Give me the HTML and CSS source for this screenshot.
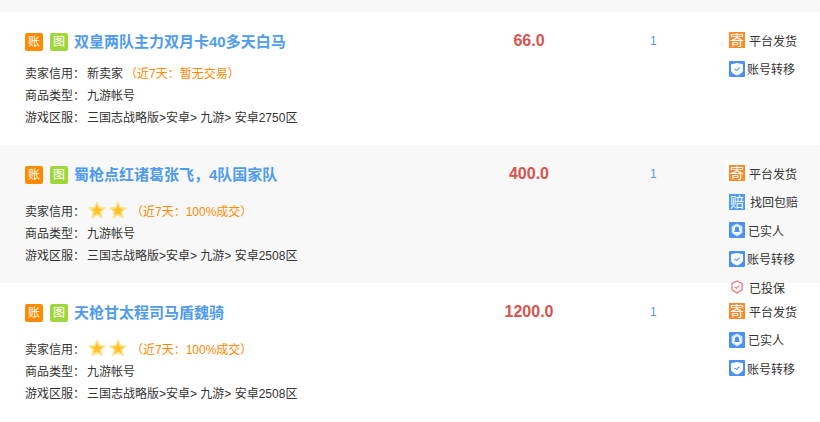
FILE: index.html
```html
<!DOCTYPE html>
<html lang="zh-CN">
<head>
    <meta charset="UTF-8">
    <title>商品列表</title>
    <link rel="stylesheet" href="styles.css">
</head>
<body>
    <svg class="defs" width="0" height="0">
        <symbol id="ico-person" viewBox="0 0 16 16">
            <rect width="16" height="16" rx="1" fill="#4a90f5"/>
            <path d="M8 1.6 13.4 4.2V11L8 14.4 2.6 11V4.2Z" fill="#cfe2fd"/>
            <circle cx="8" cy="8" r="4.4" fill="#fff"/>
            <path d="M8 4.6a2.1 2.1 0 0 1 2.1 2.1V8.6L11 10H5l.9-1.4V6.7A2.1 2.1 0 0 1 8 4.6Z" fill="#4a90f5"/>
        </symbol>
        <symbol id="ico-shield" viewBox="0 0 16 16">
            <rect width="16" height="16" rx="1" fill="#4a90f5"/>
            <path d="M2 3.2 8 2l6 1.2v5.6C14 12 10.500 13.600 8 14.500 5.500 13.600 2 12 2 8.800Z" fill="#fff"/>
            <path d="M5.600 7.800 7.500 9.600 10.600 6.600" fill="none" stroke="#4a90f5" stroke-width="1.100"/>
        </symbol>
        <symbol id="ico-guard" viewBox="0 0 16 16">
            <path d="M8 2 13 4.500V10.800L8 14 3 10.800V4.500Z" fill="#fff" stroke="#f2777a" stroke-width="1.300"/>
            <path d="M5.800 7.800 7.500 9.500 10.300 6.700" fill="none" stroke="#f2777a" stroke-width="1.100"/>
        </symbol>
        <symbol id="ico-star" viewBox="0 0 18 18">
            <path d="M9 .8 11.500 6.300 17.400 7 13 11 14.200 17 9 14 3.800 17 5 11 .6 7 6.500 6.300Z" fill="#ffe27a" stroke="#fbe39a" stroke-width="1"/>
            <path d="M9 3.500 10.700 7.500 14.500 8 11.500 10.600 12.300 14.300 9 12.400 5.700 14.300 6.500 10.600 3.500 8 7.300 7.500Z" fill="#fcc22e"/>
        </symbol>
    </svg>

    <div class="list">
        <div class="row">
            <div class="info">
                <h3 class="title"><span class="tag tag-zh">账</span><span class="tag tag-tu">图</span><a>双皇两队主力双月卡40多天白马</a></h3>
                <p class="line first"><span class="label">卖家信用：</span>新卖家<span class="recent">（近7天：暂无交易）</span></p>
                <p class="line"><span class="label">商品类型：</span>九游帐号</p>
                <p class="line"><span class="label">游戏区服：</span>三国志战略版&gt;安卓&gt; 九游&gt; 安卓2750区</p>
            </div>
            <div class="price">66.0</div>
            <div class="count">1</div>
            <ul class="services">
                <li><span class="ico ico-orange">寄</span><span class="s1">平台发货</span></li>
                <li><svg class="ico"><use href="#ico-shield"/></svg><span class="s4">账号转移</span></li>
            </ul>
        </div>

        <div class="row row-alt">
            <div class="info">
                <h3 class="title"><span class="tag tag-zh">账</span><span class="tag tag-tu">图</span><a>蜀枪点红诸葛张飞，4队国家队</a></h3>
                <p class="line first tall"><span class="label">卖家信用：</span><svg class="star"><use href="#ico-star"/></svg><svg class="star"><use href="#ico-star"/></svg><span class="recent">（近7天：100%成交）</span></p>
                <p class="line"><span class="label">商品类型：</span>九游帐号</p>
                <p class="line"><span class="label">游戏区服：</span>三国志战略版&gt;安卓&gt; 九游&gt; 安卓2508区</p>
            </div>
            <div class="price">400.0</div>
            <div class="count">1</div>
            <ul class="services">
                <li><span class="ico ico-orange">寄</span><span class="s1">平台发货</span></li>
                <li><span class="ico ico-blue">赔</span><span class="s2">找回包赔</span></li>
                <li><svg class="ico"><use href="#ico-person"/></svg><span class="s3">已实人</span></li>
                <li><svg class="ico"><use href="#ico-shield"/></svg><span class="s4">账号转移</span></li>
                <li><svg class="ico"><use href="#ico-guard"/></svg><span class="s1">已投保</span></li>
            </ul>
        </div>

        <div class="row">
            <div class="info">
                <h3 class="title"><span class="tag tag-zh">账</span><span class="tag tag-tu">图</span><a>天枪甘太程司马盾魏骑</a></h3>
                <p class="line first tall"><span class="label">卖家信用：</span><svg class="star"><use href="#ico-star"/></svg><svg class="star"><use href="#ico-star"/></svg><span class="recent">（近7天：100%成交）</span></p>
                <p class="line"><span class="label">商品类型：</span>九游帐号</p>
                <p class="line"><span class="label">游戏区服：</span>三国志战略版&gt;安卓&gt; 九游&gt; 安卓2508区</p>
            </div>
            <div class="price">1200.0</div>
            <div class="count">1</div>
            <ul class="services">
                <li><span class="ico ico-orange">寄</span><span class="s1">平台发货</span></li>
                <li><svg class="ico"><use href="#ico-person"/></svg><span class="s3">已实人</span></li>
                <li><svg class="ico"><use href="#ico-shield"/></svg><span class="s4">账号转移</span></li>
            </ul>
        </div>
    </div>
</body>
</html>
```

FILE: styles.css
```css
* {
    margin: 0;
    padding: 0;
    box-sizing: border-box;
}

body {
    font-family: "Liberation Sans", "Noto Sans CJK SC", sans-serif;
    font-size: 12px;
    color: #333;
    background: #f8f8f8;
    overflow: hidden;
}

.defs {
    position: absolute;
}

.list {
    padding-top: 12px;
}

.row {
    display: flex;
    height: 138px;
    padding: 21px 0 0 25px;
    background: #fff;
}

.row:first-child {
    height: 133px;
}

.row-alt {
    background: #f8f8f8;
}

.info {
    width: 459px;
}

.title {
    display: flex;
    align-items: center;
    height: 18px;
    font-size: 15px;
    font-weight: 700;
    color: #4f9bf0;
}

.title a {
    margin-top: -3px;
}

.tag {
    display: block;
    width: 18px;
    height: 18px;
    margin-right: 7px;
    border-radius: 2px;
    color: #fff;
    font-size: 12px;
    font-weight: 400;
    line-height: 18px;
    text-align: center;
}

.tag-zh {
    background: #ff8a00;
}

.tag-tu {
    background: #a0d83c;
    margin-right: 6px;
}

.line {
    display: flex;
    align-items: center;
    height: 22px;
    white-space: pre;
}

.first {
    margin-top: 10px;
}

.tall {
    margin-top: 15px;
}

.label {
    width: 62px;
}

.recent {
    color: #ff8a00;
    margin-left: 2px;
}

.star {
    width: 18px;
    height: 18px;
    margin: -1px 2px 0 1px;
}

.price {
    width: 90px;
    text-align: center;
    font-size: 16px;
    font-weight: 700;
    line-height: 16px;
    color: #d9534f;
}

.count {
    width: 155px;
    padding-left: 76px;
    color: #4f9bf0;
    line-height: 16px;
}

.services {
    list-style: none;
    margin-top: -1px;
}

.services li {
    display: flex;
    align-items: center;
    height: 16px;
    margin-bottom: 12.600px;
    white-space: nowrap;
}

.ico {
    display: block;
    flex: none;
    width: 16px;
    height: 16px;
    font-size: 14px;
    line-height: 16px;
    text-align: center;
    color: #fff;
}

/* the source image has a white box around it, shows on the grey row */
.ico-orange {
    background: #ff8a2a;
    box-shadow: 0 -1.500px 0 3.500px #fff;
}

.ico-blue {
    background: #4a9bf5;
}

.s1 {
    margin-left: 4px;
}

.s2 {
    margin-left: 5px;
}

.s3 {
    margin-left: 3px;
}

.s4 {
    margin-left: 2px;
}
```
